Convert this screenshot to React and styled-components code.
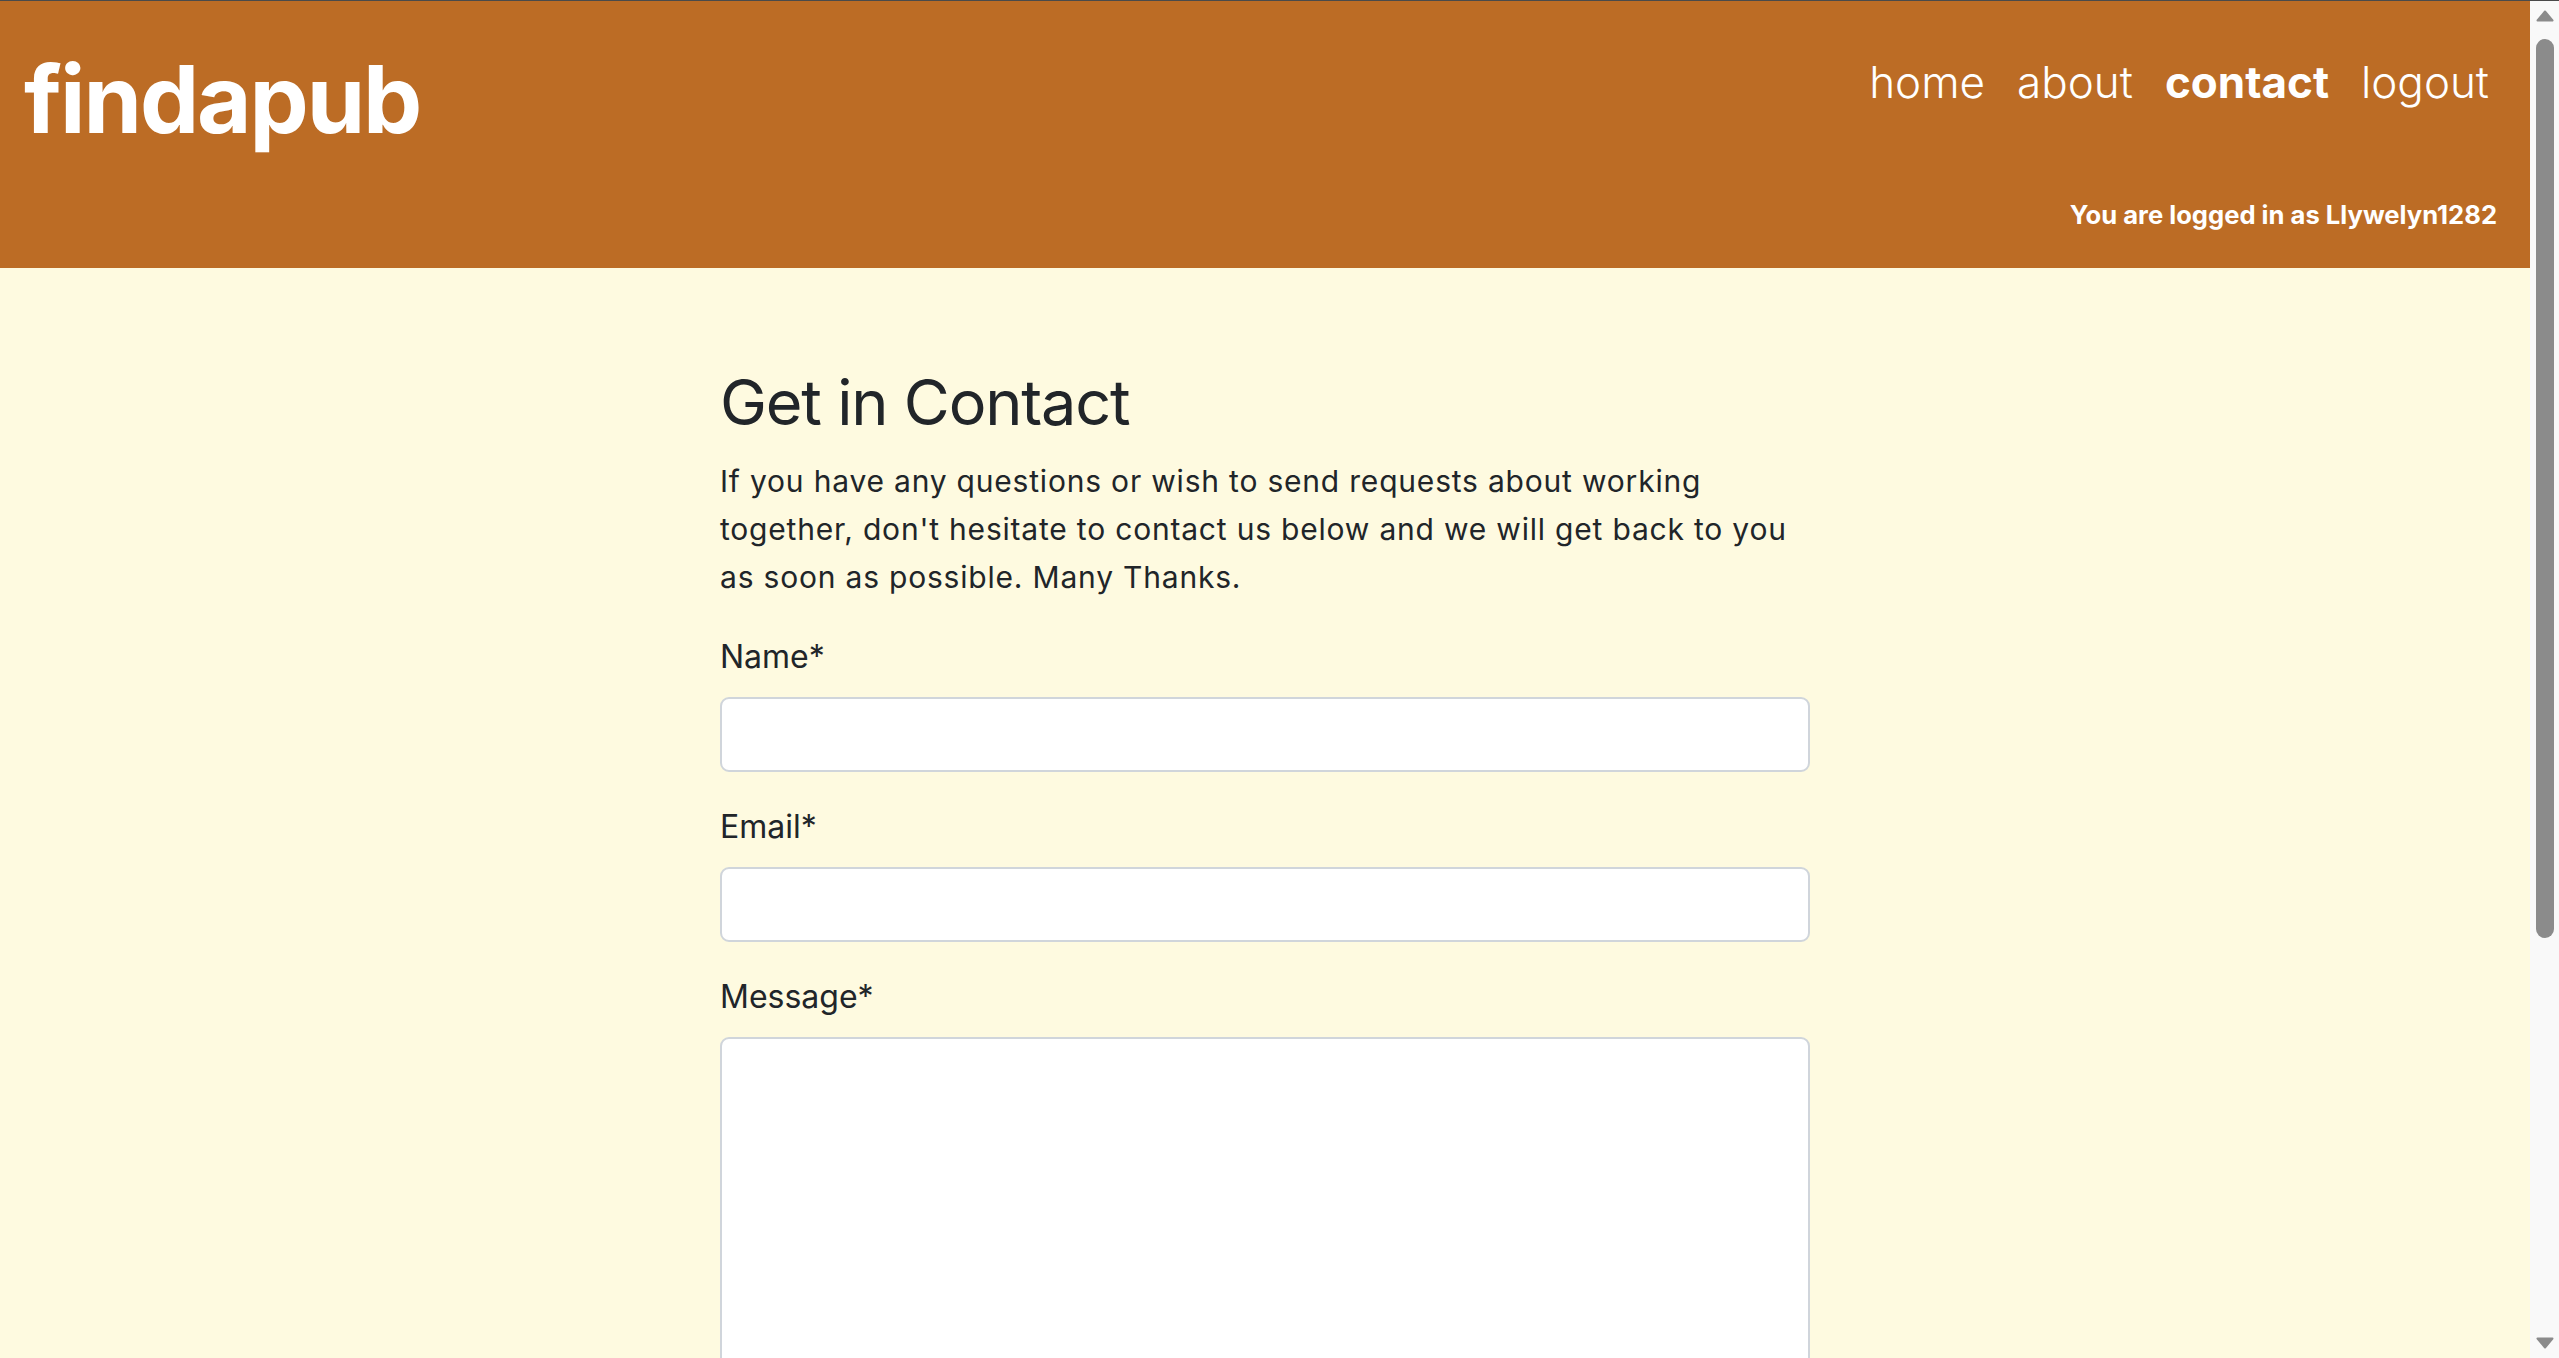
import styled, { createGlobalStyle } from "styled-components";

const GlobalStyle = createGlobalStyle`
  html, body {
    margin: 0;
    padding: 0;
    background: #fefae0;
    font-family: Inter, "Noto Sans", sans-serif;
    color: #212529;
  }
  * {
    box-sizing: border-box;
  }
`;

const links = [
  { label: "home", active: false },
  { label: "about", active: false },
  { label: "contact", active: true },
  { label: "logout", active: false },
];

const fields = [
  { id: "name", label: "Name*", type: "text" },
  { id: "email", label: "Email*", type: "email" },
];

const Arrow = ({ down }) => (
  <ArrowIcon viewBox="0 0 18 12" $down={down}>
    <path d="M9 1.5 L16.5 10.5 L1.5 10.5 Z" fill="#8b8b8b" stroke="#8b8b8b" strokeWidth="2" strokeLinejoin="round" />
  </ArrowIcon>
);

const App = () => {
  return (
    <>
      <GlobalStyle />
      <Frame>
        <Page>
          <Header>
            <Logo>findapub</Logo>
            <HeaderRight>
              <Nav>
                {links.map((link) => (
                  <NavLink key={link.label} href="#" $active={link.active}>
                    {link.label}
                  </NavLink>
                ))}
              </Nav>
              <LoggedIn>You are logged in as Llywelyn1282</LoggedIn>
            </HeaderRight>
          </Header>
          <Main>
            <Title>Get in Contact</Title>
            <Intro>
              If you have any questions or wish to send requests about working
              together, don't hesitate to contact us below and we will get back
              to you as soon as possible. Many Thanks.
            </Intro>
            <Form onSubmit={(e) => e.preventDefault()}>
              {fields.map((field) => (
                <Field key={field.id}>
                  <Label htmlFor={field.id}>{field.label}</Label>
                  <Input id={field.id} type={field.type} />
                </Field>
              ))}
              <Field>
                <Label htmlFor="message">Message*</Label>
                <TextArea id="message" />
              </Field>
            </Form>
          </Main>
        </Page>
        <ScrollBar aria-hidden="true">
          <Arrow />
          <Thumb />
          <Arrow down />
        </ScrollBar>
      </Frame>
    </>
  );
};

const Frame = styled.div`
  display: flex;
  height: 100vh;
  border-top: 1px solid #4a4a4a;
`;

const Page = styled.div`
  flex: 1;
  min-width: 0;
  overflow-y: auto;
  scrollbar-width: none;
  &::-webkit-scrollbar {
    display: none;
  }
`;

const ScrollBar = styled.div`
  display: flex;
  flex-direction: column;
  align-items: center;
  width: 29px;
  padding: 9px 5px 9px 6px;
  background: #f9f9f9;
`;

const ArrowIcon = styled.svg`
  width: 18px;
  height: 12px;
  flex-shrink: 0;
  transform: ${(p) => (p.$down ? "rotate(180deg)" : "none")};
`;

const Thumb = styled.div`
  width: 18px;
  height: 899px;
  margin: 17px 0 auto 0;
  border-radius: 9px;
  background: #8b8b8b;
`;

const Header = styled.header`
  display: flex;
  justify-content: space-between;
  align-items: flex-start;
  height: 267px;
  padding: 0 33px 0 24px;
  background: #bc6c25;
  color: #fff;
`;

const Logo = styled.h1`
  margin: 42px 0 0 0;
  font-size: 94px;
  font-weight: 700;
  line-height: 1.2;
  letter-spacing: -2.1px;
`;

const HeaderRight = styled.div`
  display: flex;
  flex-direction: column;
  align-items: flex-end;
  padding-top: 48px;
`;

const Nav = styled.nav`
  display: flex;
  gap: 16px;
`;

const NavLink = styled.a`
  padding: 0 8px;
  color: #fff;
  text-decoration: none;
  font-size: 44px;
  line-height: 66px;
  font-weight: ${(p) => (p.$active ? 700 : 300)};
`;

const LoggedIn = styled.p`
  margin: 81px 0 0 0;
  font-size: 25.6px;
  font-weight: 700;
  line-height: 38.4px;
`;

const Main = styled.main`
  max-width: 1090px;
  margin: 0 auto;
  padding: 96px 0 360px 0;
`;

const Title = styled.h2`
  margin: 0 0 17px 0;
  font-size: 63px;
  font-weight: 400;
  line-height: 76px;
  letter-spacing: -1.2px;
`;

const Intro = styled.p`
  margin: 0 0 32px 0;
  font-size: 30px;
  line-height: 48px;
  letter-spacing: 0.8px;
`;

const Form = styled.form`
  display: flex;
  flex-direction: column;
  gap: 31px;
`;

const Field = styled.div`
  display: flex;
  flex-direction: column;
  gap: 16px;
`;

const Label = styled.label`
  font-size: 32px;
  line-height: 48px;
`;

const Input = styled.input`
  width: 100%;
  height: 75px;
  padding: 0 18px;
  font: inherit;
  font-size: 30px;
  background: #fff;
  border: 2px solid #d0d5db;
  border-radius: 9px;
`;

const TextArea = styled.textarea`
  width: 100%;
  height: 560px;
  padding: 12px 18px;
  font: inherit;
  font-size: 30px;
  background: #fff;
  border: 2px solid #d0d5db;
  border-radius: 9px;
  resize: vertical;
`;

export default App;
